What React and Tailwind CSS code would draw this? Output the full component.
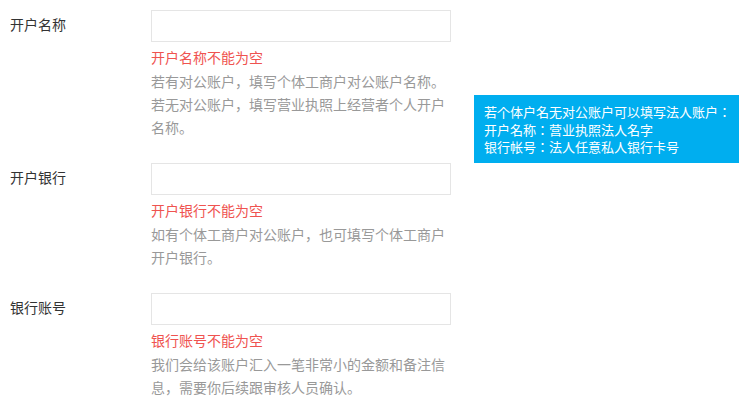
const font = { fontFamily: '"Noto Sans CJK SC", "Liberation Sans", sans-serif' };

const fields = [
  {
    label: '开户名称',
    error: '开户名称不能为空',
    help: ['若有对公账户，填写个体工商户对公账户名称。', '若无对公账户，填写营业执照上经营者个人开户', '名称。'],
  },
  {
    label: '开户银行',
    error: '开户银行不能为空',
    help: ['如有个体工商户对公账户，也可填写个体工商户', '开户银行。'],
  },
  {
    label: '银行账号',
    error: '银行账号不能为空',
    help: ['我们会给该账户汇入一笔非常小的金额和备注信', '息，需要你后续跟审核人员确认。'],
  },
];

function Field({ label, error, help }) {
  return (
    <div className="flex mb-[24px]">
      <div className="w-[151px] pl-[10px] pt-[4px] text-[14px] leading-[20px] text-[#333]">{label}</div>
      <div className="w-[300px]">
        <input className="block w-[300px] h-[32px] border border-[#e5e5e5] bg-white outline-none" />
        <p className="mt-[5px] text-[14px] leading-[20px] text-[#ef5350]">{error}</p>
        <div className="mt-[3px] text-[14px] leading-[23px] text-[#999] [text-spacing-trim:space-all]">
          {help.map((l) => (
            <p key={l} className="whitespace-nowrap">{l}</p>
          ))}
        </div>
      </div>
    </div>
  );
}

export default function App() {
  return (
    <div className="relative w-[743px] h-[412px] bg-white overflow-hidden" style={font}>
      <div className="pt-[10px]">
        {fields.map((f) => (
          <Field key={f.label} {...f} />
        ))}
      </div>
      <div
        className="absolute left-[474px] top-[95px] w-[265px] h-[68px] bg-[#00aeef] text-white text-[13px] leading-[17.5px] pl-[10px] pt-[8px] [text-spacing-trim:space-all]"
        style={{ fontFamily: '"Noto Sans CJK JP", "Noto Sans CJK SC", sans-serif' }}
      >
        <p className="whitespace-nowrap">若个体户名无对公账户可以填写法人账户：</p>
        <p>开户名称：营业执照法人名字</p>
        <p>银行帐号：法人任意私人银行卡号</p>
      </div>
    </div>
  );
}
